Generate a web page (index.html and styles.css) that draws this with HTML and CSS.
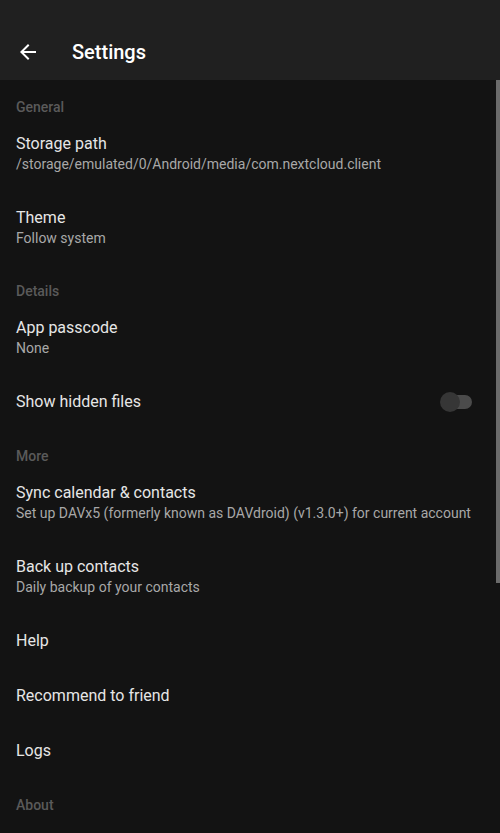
FILE: index.html
```html
<!DOCTYPE html>
<html lang="en">

<head>
    <meta charset="UTF-8">
    <meta name="viewport" content="width=device-width, initial-scale=1.0">
    <title>Settings</title>
    <link rel="stylesheet" href="styles.css">
</head>

<body>
    <div class="app-bar">
        <button class="back-btn" aria-label="Back">
            <svg width="24" height="24" viewBox="0 0 24 24">
                <path d="M20 11H7.83l5.59-5.59L12 4l-8 8 8 8 1.41-1.41L7.83 13H20v-2z" fill="#ffffff" />
            </svg>
        </button>
        <h1 class="app-title">Settings</h1>
    </div>

    <div class="pref-list">
        <div class="scrollbar"></div>

        <div class="pref-category">General</div>
        <div class="pref-item two-line">
            <div class="pref-title">Storage path</div>
            <div class="pref-summary">/storage/emulated/0/Android/media/com.nextcloud.client</div>
        </div>
        <div class="pref-item two-line">
            <div class="pref-title">Theme</div>
            <div class="pref-summary">Follow system</div>
        </div>

        <div class="pref-category">Details</div>
        <div class="pref-item two-line">
            <div class="pref-title">App passcode</div>
            <div class="pref-summary">None</div>
        </div>
        <div class="pref-item single switch-row">
            <div class="pref-title">Show hidden files</div>
            <div class="switch">
                <div class="switch-track"></div>
                <div class="switch-thumb"></div>
            </div>
        </div>

        <div class="pref-category">More</div>
        <div class="pref-item two-line">
            <div class="pref-title">Sync calendar &amp; contacts</div>
            <div class="pref-summary">Set up DAVx5 (formerly known as DAVdroid) (v1.3.0+) for current account</div>
        </div>
        <div class="pref-item two-line">
            <div class="pref-title">Back up contacts</div>
            <div class="pref-summary">Daily backup of your contacts</div>
        </div>
        <div class="pref-item single">
            <div class="pref-title">Help</div>
        </div>
        <div class="pref-item single">
            <div class="pref-title">Recommend to friend</div>
        </div>
        <div class="pref-item single">
            <div class="pref-title">Logs</div>
        </div>

        <div class="pref-category">About</div>
    </div>
</body>

</html>
```

FILE: styles.css
```css
body {
    margin: 0;
    height: 833px;
    overflow: hidden;
    background-color: #131313;
    font-family: Roboto, "Noto Sans", sans-serif;
}

.app-bar {
    height: 80px;
    background-color: #202020;
    display: flex;
    align-items: center;
    padding-top: 24px;
    box-sizing: border-box;
}

.back-btn {
    width: 24px;
    height: 24px;
    margin-left: 16px;
    padding: 0;
    background: none;
    border: none;
    display: flex;
}

.app-title {
    margin: 0 0 0 32px;
    font-size: 20px;
    font-weight: 500;
    color: #ffffff;
    line-height: 24px;
}

.pref-list {
    position: relative;
}

.scrollbar {
    position: absolute;
    top: 0;
    right: 0;
    width: 4px;
    height: 503px;
    background-color: #6b6b6b;
}

.pref-category {
    height: 36px;
    padding: 17px 16px 0;
    box-sizing: border-box;
    font-size: 14px;
    font-weight: 500;
    line-height: 20px;
    color: #5a5a5a;
}

.pref-item {
    display: flex;
    flex-direction: column;
    justify-content: center;
    padding: 0 16px;
    box-sizing: border-box;
}

.two-line {
    height: 74px;
    padding-top: 2px;
}

.single {
    height: 55px;
}

.pref-title {
    font-size: 16px;
    line-height: 21px;
    color: #e6e6e6;
}

.pref-summary {
    font-size: 14px;
    line-height: 21px;
    color: #a8a8a8;
    white-space: nowrap;
}

.switch-row {
    flex-direction: row;
    align-items: center;
    justify-content: space-between;
    padding-right: 28px;
}

.switch {
    position: relative;
    width: 32px;
    height: 20px;
}

.switch-track {
    position: absolute;
    left: 4px;
    top: 3px;
    width: 28px;
    height: 14px;
    border-radius: 7px;
    background-color: #4b4b4b;
}

.switch-thumb {
    position: absolute;
    left: 0;
    top: 0;
    width: 20px;
    height: 20px;
    border-radius: 50%;
    background-color: #363636;
}
```
